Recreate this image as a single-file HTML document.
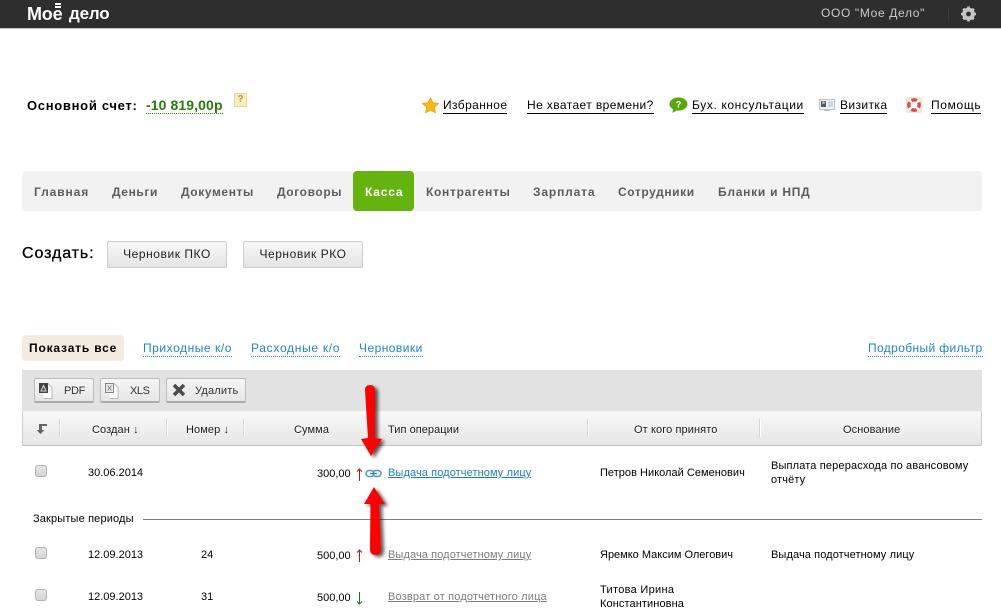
<!DOCTYPE html>
<html lang="ru"><head><meta charset="utf-8"><title>Касса</title>
<style>
html,body{margin:0;padding:0;background:#fff}
body{position:relative;width:1001px;height:616px;overflow:hidden;font-family:"Liberation Sans",Arial,sans-serif;color:#000}
.t{position:absolute;white-space:nowrap;font-size:11px;line-height:14px}
.b{position:absolute;box-sizing:border-box}
.u{text-decoration:none;border-bottom:1px solid #000;font-size:12px;line-height:15px;letter-spacing:.4px;color:#000;height:15px}
.d{border-bottom:1px dotted #1a87c9;color:#1a87c9;font-size:12px;line-height:15px;letter-spacing:.55px;height:15px}
.tab{font-weight:bold;font-size:12px;line-height:14px;letter-spacing:.6px;color:#5c5c5c;top:185px}
.btn{position:absolute;box-sizing:border-box;border:1px solid #cdcdcd;border-radius:2px;background:linear-gradient(#f8f8f8,#e4e4e4);font-size:12px;letter-spacing:.55px;text-align:center;line-height:25px;height:27px;top:241px;width:120px;color:#222}
.tb{position:absolute;box-sizing:border-box;top:378px;height:25px;border:1px solid #bcbcbc;border-bottom:2px solid #aaa;border-radius:2px;background:linear-gradient(#f6f6f6,#e6e6e6)}
.h{color:#1c1c1c;top:423px;letter-spacing:.1px;text-shadow:0 1px 0 #fff}
.sep{position:absolute;top:419px;width:1px;height:18px;background:#fff;box-shadow:-1px 0 0 #d6d6d6}
.cb{position:absolute;left:35px;width:12px;height:12px;box-sizing:border-box;border:1px solid #b0b0b0;border-radius:3px;background:linear-gradient(#e6e6e6,#d4d4d4)}
.lk{color:#1a7fc1;text-decoration:underline;letter-spacing:.1px}
.gr{color:#7c7c7c;text-decoration:underline;letter-spacing:.1px}
.s{letter-spacing:0}
</style></head><body>

<div class="b" style="left:0;top:0;width:1001px;height:29px;background:#2e2e2e;border-bottom:1px solid #c8c8c8"></div>
<div class="t" style="left:27px;top:4px;font-size:18px;line-height:20px;font-weight:bold;color:#fff;letter-spacing:-.2px">Мое</div>
<div class="b" style="left:55px;top:3px;width:6px;height:1.5px;background:#fff"></div>
<div class="b" style="left:55px;top:6px;width:6px;height:1.5px;background:#fff"></div>
<div class="t" style="left:69px;top:4px;font-size:17px;line-height:20px;font-weight:bold;color:#fff;letter-spacing:-.2px">дело</div>
<div class="t" style="left:821px;top:6px;font-size:12px;line-height:15px;color:#c9c9c9;letter-spacing:.65px">ООО "Мое Дело"</div>
<div class="b" style="left:948px;top:7px;width:1px;height:14px;background:#3c3c3c"></div>
<svg style="position:absolute;left:961px;top:6px" width="15" height="16" viewBox="0 0 15 16"><circle cx="7.5" cy="8" r="4.8" fill="none" stroke="#c4c4c4" stroke-width="3.2"/><path d="M7.5 0.5V15.5M0 8H15M2.2 2.7L12.8 13.3M12.8 2.7L2.2 13.3" stroke="#c4c4c4" stroke-width="2.6"/><circle cx="7.5" cy="8" r="2.4" fill="#2e2e2e"/></svg>

<div class="t" style="left:27px;top:98px;font-size:13px;line-height:16px;font-weight:bold;letter-spacing:.7px">Основной счет:</div>
<div class="t" style="left:146px;top:98px;font-size:14px;line-height:15px;font-weight:bold;color:#287a0a;border-bottom:1px dotted #287a0a;letter-spacing:.1px">-10 819,00р</div>
<div class="b" style="left:234px;top:93px;width:13px;height:14px;background:#f9eeb5;border:1px solid #e0d9a8;color:#a89850;font-size:10px;font-weight:bold;line-height:12px;text-align:center">?</div>

<svg style="position:absolute;left:422px;top:97px" width="17" height="17" viewBox="0 0 17 17"><path d="M8.5 .8L10.9 5.8L16.4 6.5L12.4 10.3L13.4 15.8L8.5 13.1L3.6 15.8L4.6 10.3L.6 6.5L6.1 5.8Z" fill="#fdb90f" stroke="#ee9d12" stroke-width=".8"/></svg>
<div class="t u" style="left:443px;top:98px;letter-spacing:.4px">Избранное</div>
<div class="t u" style="left:527px;top:98px;letter-spacing:.4px">Не хватает времени?</div>
<svg style="position:absolute;left:669px;top:97px" width="19" height="17" viewBox="0 0 19 17"><ellipse cx="9.5" cy="7" rx="9" ry="6.6" fill="#5aa60e"/><path d="M4 11L3.5 16L9 12.5Z" fill="#5aa60e"/><text x="9.5" y="10.5" font-size="9" font-weight="bold" text-anchor="middle" fill="#fff" font-family="Liberation Sans">?</text></svg>
<div class="t u" style="left:692px;top:98px;letter-spacing:.62px">Бух. консультации</div>
<svg style="position:absolute;left:819px;top:98px" width="16" height="15" viewBox="0 0 16 15"><rect x=".5" y="1.5" width="15" height="10" fill="#f0f4f6" stroke="#b4c0c8"/><rect x="2" y="3" width="5" height="6" fill="#45586e"/><circle cx="4.5" cy="4.7" r="1.4" fill="#d9b48f"/><path d="M9 4h5M9 6h5M9 8h5" stroke="#a9bcc4"/><path d="M5 12h6" stroke="#b4c0c8" stroke-width="2"/></svg>
<div class="t u" style="left:840px;top:98px;letter-spacing:.4px">Визитка</div>
<svg style="position:absolute;left:906px;top:97px" width="16" height="16" viewBox="0 0 16 16"><rect width="16" height="16" rx="2" fill="#f3e6d0"/><circle cx="8" cy="8" r="7" fill="#fff"/><circle cx="8" cy="8" r="5.2" fill="none" stroke="#e2483f" stroke-width="3.4" stroke-dasharray="5.6 2.57" stroke-dashoffset="2.8"/></svg>
<div class="t u" style="left:931px;top:98px;letter-spacing:.65px">Помощь</div>

<div class="b" style="left:22px;top:171px;width:960px;height:40px;background:#f2f2f2;border-radius:4px"></div>
<div class="b" style="left:353px;top:171px;width:61px;height:40px;background:#65b30f;border-radius:4px"></div>
<div class="t tab" style="left:34px;letter-spacing:.9px">Главная</div>
<div class="t tab" style="left:112px">Деньги</div>
<div class="t tab" style="left:181px">Документы</div>
<div class="t tab" style="left:277px">Договоры</div>
<div class="t tab" style="left:365px;color:#fff;letter-spacing:.8px">Касса</div>
<div class="t tab" style="left:426px;letter-spacing:.7px">Контрагенты</div>
<div class="t tab" style="left:533px;letter-spacing:.85px">Зарплата</div>
<div class="t tab" style="left:618px">Сотрудники</div>
<div class="t tab" style="left:718px;letter-spacing:.75px">Бланки и НПД</div>

<div class="t" style="left:22px;top:244px;font-size:16px;line-height:19px;letter-spacing:.9px;-webkit-text-stroke:.3px #000">Создать:</div>
<div class="btn" style="left:107px">Черновик ПКО</div>
<div class="btn" style="left:243px">Черновик РКО</div>

<div class="b" style="left:22px;top:335px;width:102px;height:26px;background:#f3ebdf;border-radius:4px"></div>
<div class="t" style="left:29px;top:341px;font-size:12px;line-height:15px;font-weight:bold;letter-spacing:.82px">Показать все</div>
<div class="t d" style="left:143px;top:341px">Приходные к/о</div>
<div class="t d" style="left:251px;top:341px;letter-spacing:.7px">Расходные к/о</div>
<div class="t d" style="left:359px;top:341px;letter-spacing:.45px">Черновики</div>
<div class="t d" style="left:868px;top:341px;letter-spacing:.37px">Подробный фильтр</div>

<div class="b" style="left:22px;top:370px;width:960px;height:41px;background:#e2e2e2"></div>
<div class="tb" style="left:34px;width:60px"></div>
<div class="tb" style="left:100px;width:60px"></div>
<div class="tb" style="left:166px;width:80px"></div>
<svg style="position:absolute;left:39px;top:383px" width="15" height="16" viewBox="0 0 15 16"><path d="M2 .5H9L13 4.500V15.500H5" fill="#fff" stroke="#b8b8b8"/><rect x="0" y="0" width="9" height="10" fill="#454545"/><path d="M2 8L4.500 2.500L7 8Z" fill="none" stroke="#ddd"/></svg>
<div class="t" style="left:64px;top:384px;letter-spacing:-.3px;color:#333">PDF</div>
<svg style="position:absolute;left:105px;top:383px" width="15" height="16" viewBox="0 0 15 16"><path d="M2 .5H9L13 4.500V15.500H5" fill="#fff" stroke="#b8b8b8"/><rect x=".5" y=".5" width="8" height="9" fill="#e8e8e8" stroke="#888"/><path d="M2.500 2.500L6.500 7.500M6.500 2.500L2.500 7.500" stroke="#888"/></svg>
<div class="t" style="left:130px;top:384px;letter-spacing:-.4px;color:#333">XLS</div>
<svg style="position:absolute;left:172px;top:383px" width="14" height="14" viewBox="0 0 14 14"><path d="M2 2L12 12M12 2L2 12" stroke="#4c4c4c" stroke-width="3.600"/></svg>
<div class="t" style="left:195px;top:384px;letter-spacing:.2px;color:#333">Удалить</div>

<div class="b" style="left:22px;top:411px;width:960px;height:35px;background:linear-gradient(#f8f8f8,#e6e6e6);border-bottom:1px solid #c4c4c4;border-top:1px solid #f2f2f2;border-right:1px solid #ccc;border-left:1px solid #ccc"></div>
<svg style="position:absolute;left:36px;top:423px" width="12" height="12" viewBox="0 0 12 12"><path d="M3 1H11V3H6V7H8.500L4.500 11L.5 7H3Z" fill="#666"/></svg>
<div class="sep" style="left:60px"></div><div class="sep" style="left:167px"></div><div class="sep" style="left:244px"></div><div class="sep" style="left:588px"></div><div class="sep" style="left:760px"></div>
<div class="t h" style="left:92px">Создан ↓</div>
<div class="t h" style="left:186px">Номер ↓</div>
<div class="t h" style="left:294px">Сумма</div>
<div class="t h" style="left:388px;letter-spacing:.05px">Тип операции</div>
<div class="t h" style="left:634px">От кого принято</div>
<div class="t h" style="left:843px">Основание</div>

<div class="cb" style="top:465px"></div>
<div class="t s" style="left:88px;top:466px">30.06.2014</div>
<div class="t s" style="left:317px;top:467px">300,00</div>
<svg style="position:absolute;left:356px;top:468px" width="7" height="13" viewBox="0 0 7 13"><path d="M3.500 13V1M1 3.500L3.500 1L6 3.500" fill="none" stroke="#b81414" stroke-width="1"/></svg>
<svg style="position:absolute;left:365px;top:469px" width="17" height="9" viewBox="0 0 17 9"><rect x="1" y="1.500" width="8" height="6" rx="3" fill="none" stroke="#4c96d4" stroke-width="1.500"/><rect x="8" y="1.500" width="8" height="6" rx="3" fill="none" stroke="#4c96d4" stroke-width="1.500"/><path d="M5 4.500H12" stroke="#3b7fbc" stroke-width="1.200"/></svg>
<div class="t lk" style="left:388px;top:466px">Выдача подотчетному лицу</div>
<div class="t" style="left:600px;top:466px;letter-spacing:.03px">Петров Николай Семенович</div>
<div class="t" style="left:771px;top:459px;letter-spacing:.15px">Выплата перерасхода по авансовому</div>
<div class="t" style="left:771px;top:473px;letter-spacing:.15px">отчёту</div>

<div class="t" style="left:33px;top:512px;letter-spacing:.15px">Закрытые периоды</div>
<div class="b" style="left:143px;top:519px;width:839px;height:1px;background:#808080"></div>

<div class="cb" style="top:547px"></div>
<div class="t s" style="left:88px;top:548px">12.09.2013</div>
<div class="t s" style="left:201px;top:548px">24</div>
<div class="t s" style="left:317px;top:549px">500,00</div>
<svg style="position:absolute;left:356px;top:549px" width="7" height="13" viewBox="0 0 7 13"><path d="M3.500 13V1M1 3.500L3.500 1L6 3.500" fill="none" stroke="#b81414" stroke-width="1"/></svg>
<div class="t gr" style="left:388px;top:548px">Выдача подотчетному лицу</div>
<div class="t" style="left:600px;top:548px;letter-spacing:0">Яремко Максим Олегович</div>
<div class="t" style="left:771px;top:548px;letter-spacing:.1px">Выдача подотчетному лицу</div>

<div class="cb" style="top:589px"></div>
<div class="t s" style="left:88px;top:590px">12.09.2013</div>
<div class="t s" style="left:201px;top:590px">31</div>
<div class="t s" style="left:317px;top:591px">500,00</div>
<svg style="position:absolute;left:356px;top:592px" width="7" height="13" viewBox="0 0 7 13"><path d="M3.500 0V12M1 9.500L3.500 12L6 9.500" fill="none" stroke="#0f7a14" stroke-width="1"/></svg>
<div class="t gr" style="left:388px;top:590px;letter-spacing:.17px">Возврат от подотчетного лица</div>
<div class="t" style="left:600px;top:583px;letter-spacing:.3px">Титова Ирина</div>
<div class="t" style="left:600px;top:597px;letter-spacing:.1px">Константиновна</div>

<svg style="position:absolute;left:355px;top:380px;overflow:visible" width="40" height="180" viewBox="0 0 40 180">
<defs><filter id="sh" x="-30%" y="-10%" width="170%" height="120%"><feDropShadow dx="3" dy="2" stdDeviation="1.800" flood-color="#000" flood-opacity=".65"/></filter></defs>
<g fill="#fe0000" filter="url(#sh)">
<path d="M10 10Q10 5 15 5Q20 5 20 10L20 58L27 59L16 76L6 59L13 58Z"/>
<path d="M19 107L30 124L24 124L26 169Q26 175 20.500 175Q15 175 15 169L15.500 124L9 124Z"/>
</g></svg>
</body></html>
